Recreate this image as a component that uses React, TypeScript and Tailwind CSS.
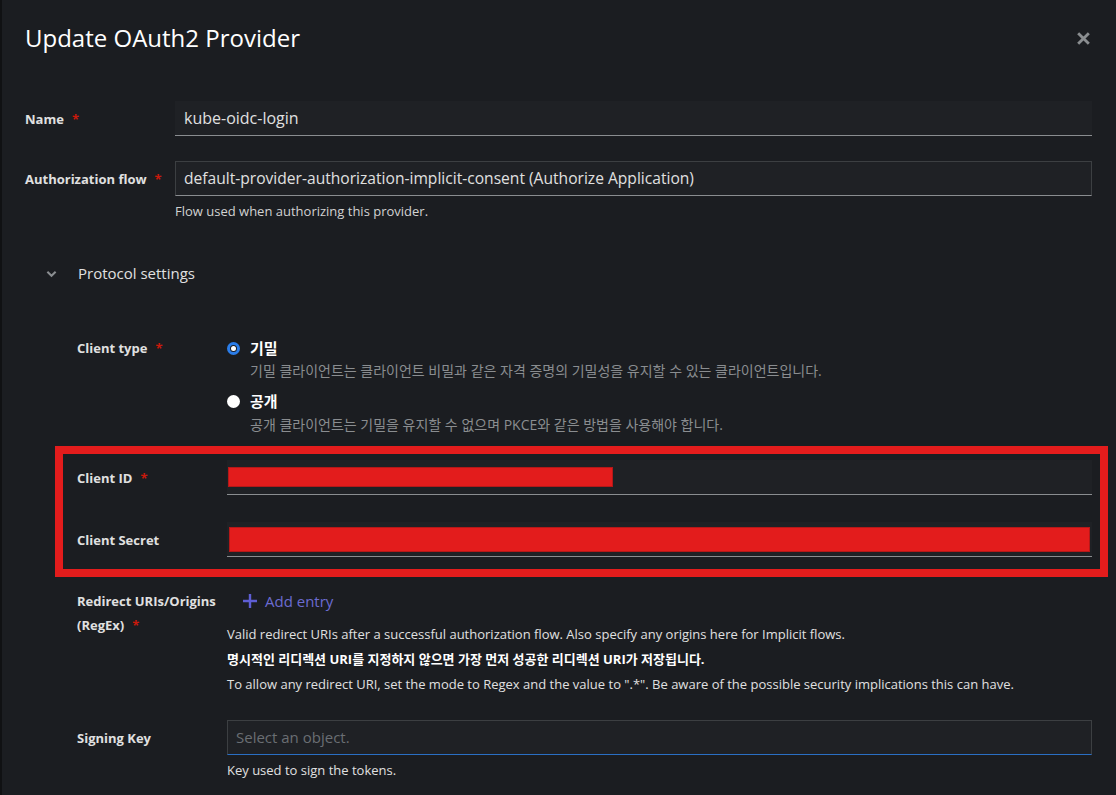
import React from "react";

const font = { fontFamily: '"Open Sans", "Noto Sans CJK KR", sans-serif' };

function Req() {
  return <span className="ml-2 text-[#c9190b] text-[13px]">*</span>;
}

function Label({ children, required }: { children: React.ReactNode; required?: boolean }) {
  return (
    <div className="w-[150px] shrink-0 text-[13px] font-bold text-[#e0e0e0] leading-[24px]">
      {children}
      {required && <Req />}
    </div>
  );
}

function CloseIcon() {
  return (
    <svg className="w-[13px] h-[13px] mt-[10px]" viewBox="0 0 12 12" fill="none" stroke="#8a8d90" strokeWidth={2.6} strokeLinecap="square">
      <path d="M2 2l8 8M10 2l-8 8" />
    </svg>
  );
}

function Chevron() {
  return (
    <svg className="w-[11px] h-[11px]" viewBox="0 0 12 12" fill="none" stroke="#8a8d90" strokeWidth={2.2}>
      <path d="M1.5 4l4.5 4.5L10.5 4" />
    </svg>
  );
}

function PlusIcon() {
  return (
    <svg className="w-[14px] h-[14px]" viewBox="0 0 14 14" fill="#5e5ed4">
      <path d="M5.8 0h2.4v5.8H14v2.4H8.2V14H5.8V8.2H0V5.8h5.8z" />
    </svg>
  );
}

export default function App() {
  return (
    <div className="min-h-[795px] w-[1116px] bg-[#1b1d21] border-l-2 border-[#101113] text-[#e0e0e0] overflow-hidden" style={font}>
      <div className="flex items-start justify-between pl-[23px] pr-[26px] pt-[22px] h-[76px]">
        <h1 className="text-[24px] leading-[32px] text-white">Update OAuth2 Provider</h1>
        <CloseIcon />
      </div>

      <div className="pl-[23px] pr-[24px] pt-[25px]">
        {/* Name */}
        <div className="flex items-center">
          <Label required>Name</Label>
          <div className="flex-1 h-[35px] bg-[#1f2125] border-b border-[#8a8d90] flex items-center px-[9px] text-[16px]">
            kube-oidc-login
          </div>
        </div>

        {/* Authorization flow */}
        <div className="flex mt-[25px]">
          <div className="h-[35px] flex items-center">
            <Label required>Authorization flow</Label>
          </div>
          <div className="flex-1">
            <div className="h-[35px] bg-[#1f2125] border border-[#3c3f42] border-b-[#8a8d90] flex items-center px-[8px] text-[15.6px]">
              default-provider-authorization-implicit-consent (Authorize Application)
            </div>
            <div className="text-[13px] text-[#d2d2d2] mt-[5px] leading-[20px]">Flow used when authorizing this provider.</div>
          </div>
        </div>

        {/* Protocol settings */}
        <div className="flex items-center mt-[40px] pl-[21px] gap-[21px] h-[24px]">
          <Chevron />
          <span className="text-[15px] text-[#e0e0e0]">Protocol settings</span>
        </div>

        <div className="pl-[52px] mt-[51px]">
          {/* Client type */}
          <div className="flex">
            <Label required>Client type</Label>
            <div className="flex flex-col">
              <div className="flex items-center gap-[10px] h-[24px]">
                <span className="w-[13px] h-[13px] rounded-full border-[3px] border-[#2b7de9] bg-[#1b1d21] flex items-center justify-center">
                  <span className="w-[5px] h-[5px] rounded-full bg-white" />
                </span>
                <span className="text-[15px] font-bold text-white">기밀</span>
              </div>
              <div className="pl-[23px] text-[14px] text-[#8a8d90] leading-[20px] mt-[1px]">
                기밀 클라이언트는 클라이언트 비밀과 같은 자격 증명의 기밀성을 유지할 수 있는 클라이언트입니다.
              </div>
              <div className="flex items-center gap-[10px] h-[24px] mt-[8px]">
                <span className="w-[13px] h-[13px] rounded-full bg-white" />
                <span className="text-[15px] font-bold text-white">공개</span>
              </div>
              <div className="pl-[23px] text-[14px] text-[#8a8d90] leading-[20px] mt-[2px]">
                공개 클라이언트는 기밀을 유지할 수 없으며 PKCE와 같은 방법을 사용해야 합니다.
              </div>
            </div>
          </div>

          {/* Highlighted credentials */}
          <div className="ml-[-22px] mr-[-16px] mt-[11px] border-[8px] border-[#e31c1c] pl-[14px] pr-[8px] pt-[6px] pb-[12px]">
            <div className="flex items-center">
              <Label required>Client ID</Label>
              <div className="flex-1 h-[35px] bg-[#1f2125] border-b border-[#8a8d90] flex items-center pl-[1px]">
                <div className="w-[385px] h-[20px] bg-[#e31c1c] border border-[#b51818]" />
              </div>
            </div>
            <div className="flex items-center mt-[27px]">
              <Label>Client Secret</Label>
              <div className="flex-1 h-[35px] bg-[#1f2125] border-b border-[#8a8d90] flex items-center pl-[2px] pr-[2px]">
                <div className="flex-1 h-[25px] bg-[#e31c1c] border border-[#b51818]" />
              </div>
            </div>
          </div>

          {/* Redirect URIs */}
          <div className="flex mt-[12px]">
            <div className="w-[150px] shrink-0 text-[13px] font-bold text-[#e0e0e0] leading-[24px]">
              Redirect URIs/Origins
              <br />
              (RegEx)
              <Req />
            </div>
            <div className="flex-1">
              <div className="flex items-center gap-[8px] h-[24px] pl-[16px]">
                <PlusIcon />
                <span className="text-[15px] text-[#6b6bd1]">Add entry</span>
              </div>
              <div className="mt-[9px] text-[13px] leading-[25px] text-[#e0e0e0]">
                <div>Valid redirect URIs after a successful authorization flow. Also specify any origins here for Implicit flows.</div>
                <div className="font-bold text-white">명시적인 리디렉션 URI를 지정하지 않으면 가장 먼저 성공한 리디렉션 URI가 저장됩니다.</div>
                <div>To allow any redirect URI, set the mode to Regex and the value to ".*". Be aware of the possible security implications this can have.</div>
              </div>
            </div>
          </div>

          {/* Signing Key */}
          <div className="flex mt-[23px]">
            <div className="h-[35px] flex items-center">
              <Label>Signing Key</Label>
            </div>
            <div className="flex-1">
              <div className="h-[35px] bg-[#1f2125] border border-[#3c3f42] border-b-[#2a6fc4] flex items-center px-[8px] text-[15px] text-[#6a6e73]">
                Select an object.
              </div>
              <div className="text-[13px] text-[#e0e0e0] mt-[5px] leading-[20px]">Key used to sign the tokens.</div>
            </div>
          </div>
        </div>
      </div>
    </div>
  );
}
